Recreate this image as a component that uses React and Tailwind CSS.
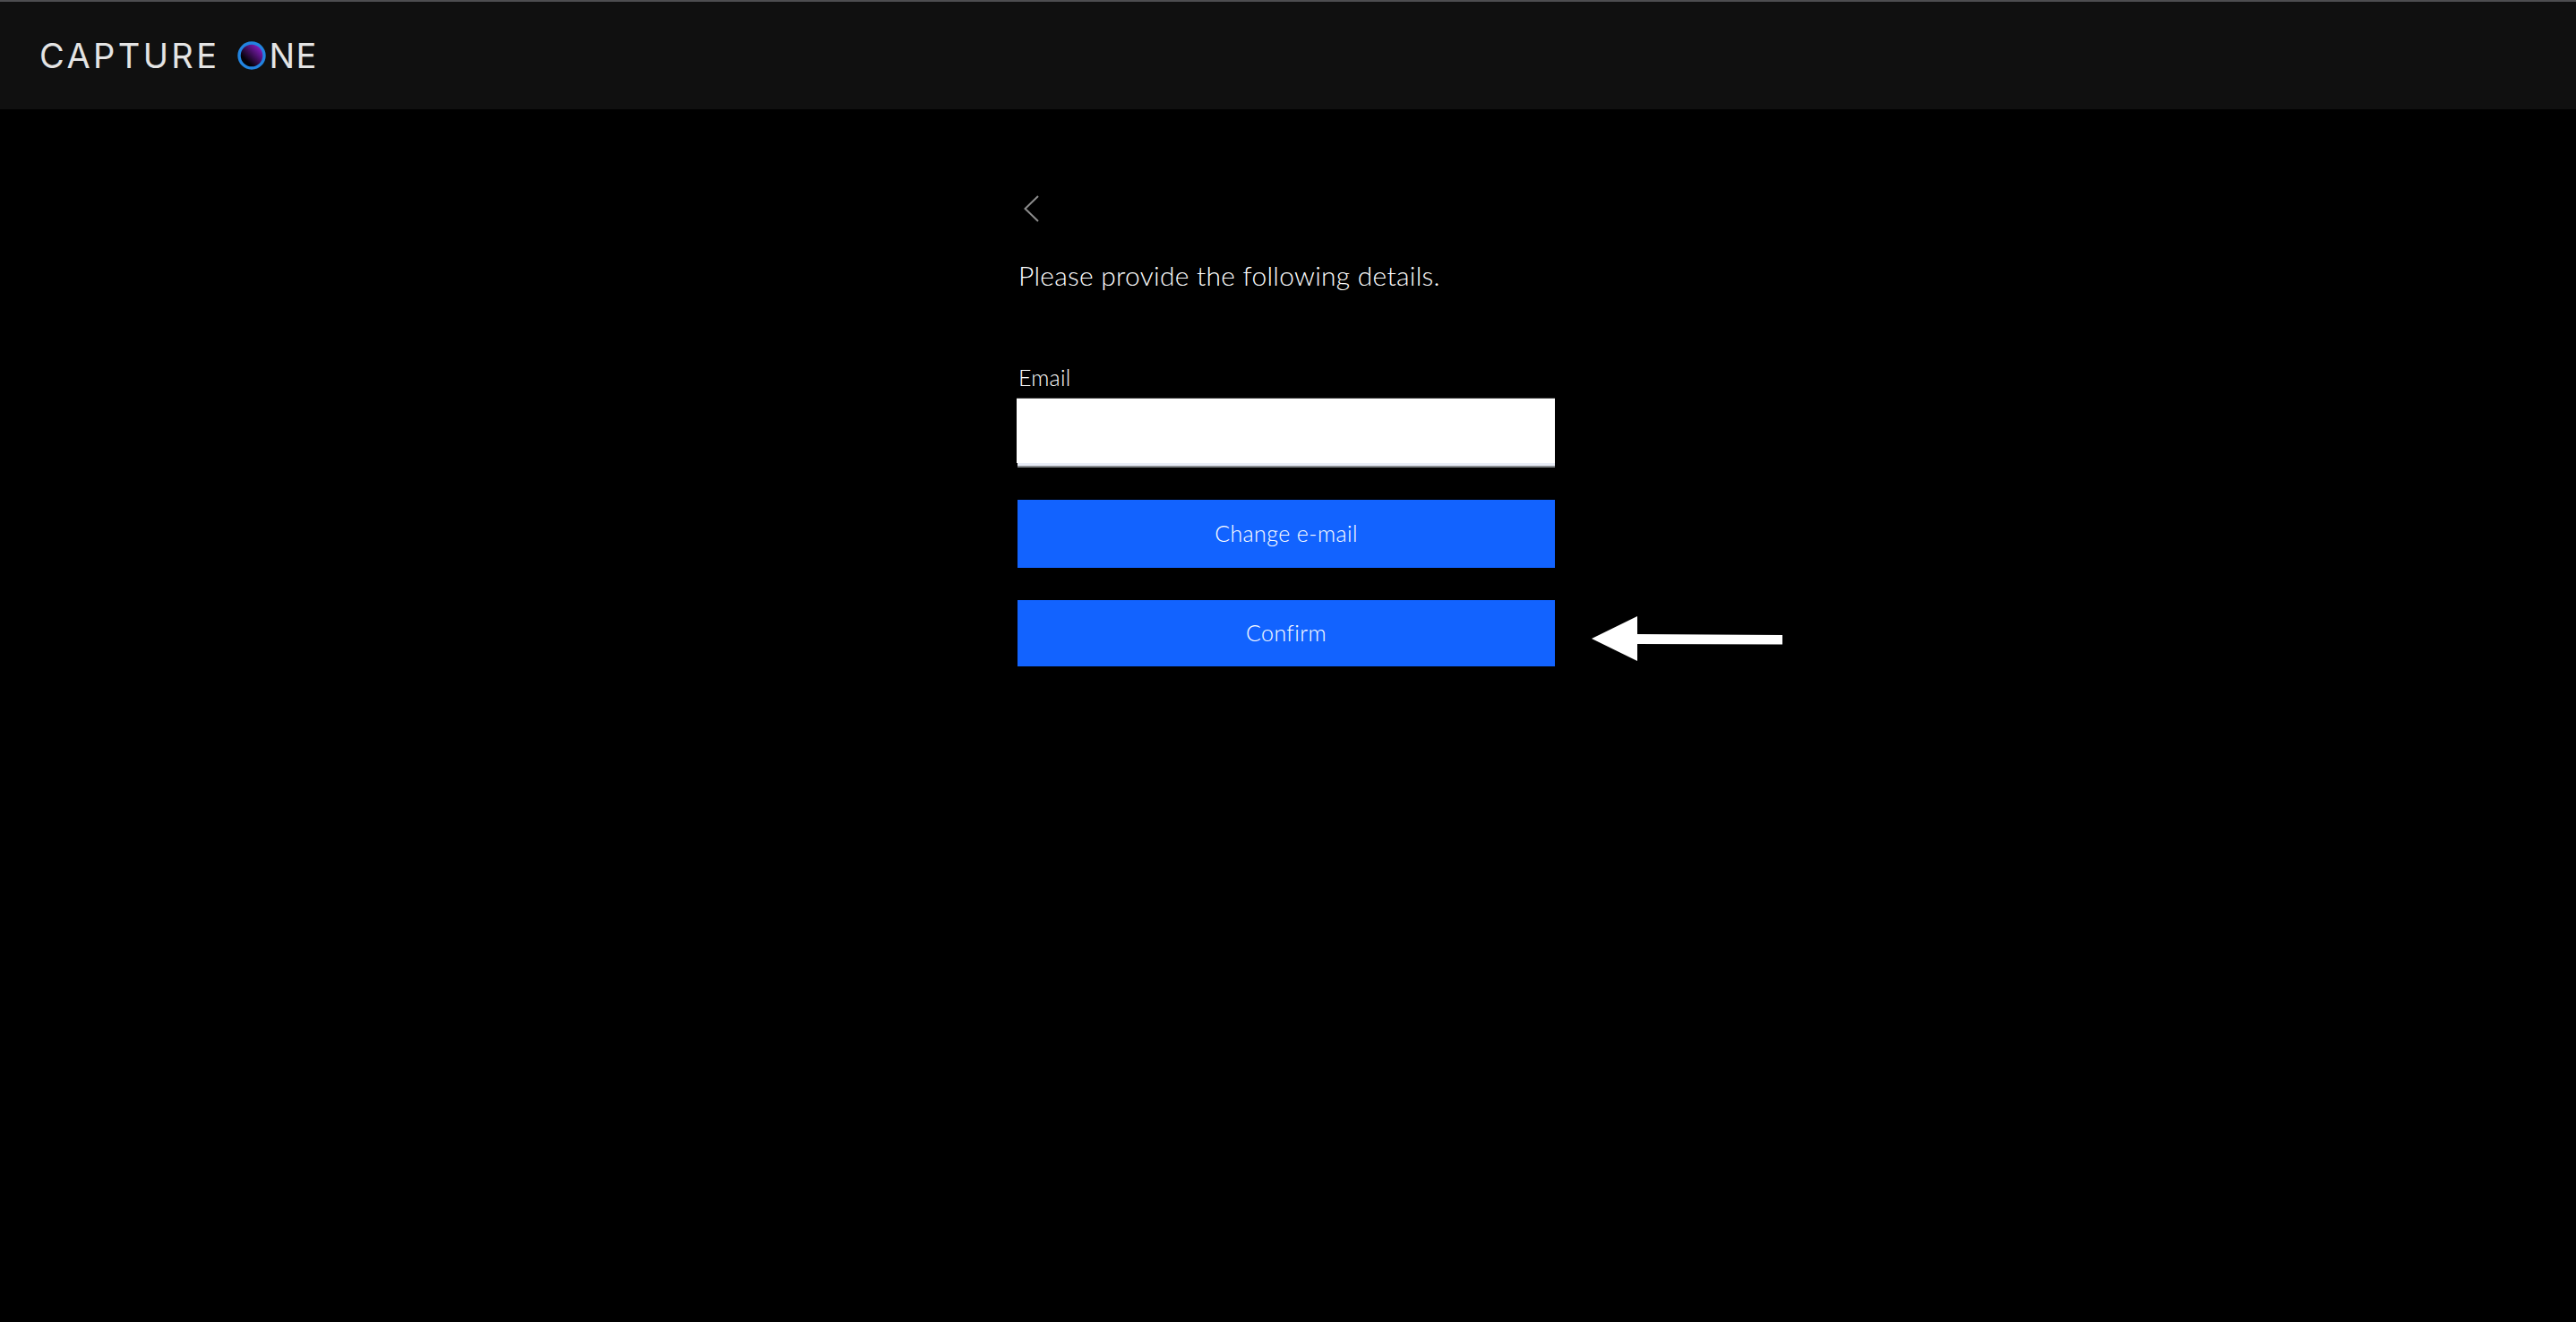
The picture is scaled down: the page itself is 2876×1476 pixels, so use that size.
export default function App() {
  return (
    <div className="min-h-screen bg-black text-white font-['Lato',sans-serif] font-light">
      <header className="h-[122px] bg-[#101010] border-t-2 border-[#4d4d50] flex items-center pl-[44px]">
        <div className="flex items-center text-[38px] leading-none text-[#e4e4e4] font-['Inter',sans-serif]">
          <span className="tracking-[3.4px] font-normal">CAPTURE</span>
          <svg width="32" height="34" viewBox="0 0 32 34" className="ml-[20px] mr-[3px]">
            <defs>
              <linearGradient id="orb" x1="0.15" y1="0.85" x2="0.85" y2="0.15">
                <stop offset="0.2" stopColor="#050208" />
                <stop offset="1" stopColor="#8a1ec4" />
              </linearGradient>
            </defs>
            <circle cx="16" cy="17" r="14" fill="url(#orb)" stroke="#2284e0" strokeWidth="3.4" />
          </svg>
          <span className="tracking-[1.4px] font-normal">NE</span>
        </div>
      </header>
      <main className="flex justify-center pr-1">
        <div className="w-[600px] flex flex-col">
          <svg width="18" height="30" viewBox="0 0 18 30" className="mt-[96px] ml-[7px]" fill="none" stroke="#8c8c8c" strokeWidth="2">
            <path d="M16 1 L1.5 15 L16 29" />
          </svg>
          <h1 className="mt-[41px] ml-px text-[30px] leading-[36px] font-light tracking-[0.25px] text-white">Please provide the following details.</h1>
          <label className="mt-[81px] ml-px text-[25px] leading-[30px] font-light tracking-[0.2px] text-white">Email</label>
          <div className="mt-[8px] h-[78px] flex flex-col">
            <input className="block -ml-px w-[601px] h-[73px] bg-white border-t border-[#3c3c3c] outline-none" aria-label="Email" />
            <div className="h-[3px] bg-[#e8ecf6]"></div>
            <div className="h-[2px] bg-[#85888c]"></div>
          </div>
          <button className="mt-[36px] h-[76px] bg-[#1263ff] text-[25px] font-light tracking-[0.4px] text-white">Change e-mail</button>
          <div className="relative mt-[36px]">
            <button className="w-full h-[74px] bg-[#1263ff] text-[25px] font-light tracking-[0.4px] text-white">Confirm</button>
            <svg width="214" height="52" viewBox="0 0 214 52" className="absolute left-[641px] top-[18px]">
              <path d="M0 25 L51 0 L51 20 L213 21 L213 31.5 L51 31 L51 50 Z" fill="#fff" />
            </svg>
          </div>
        </div>
      </main>
    </div>
  );
}
